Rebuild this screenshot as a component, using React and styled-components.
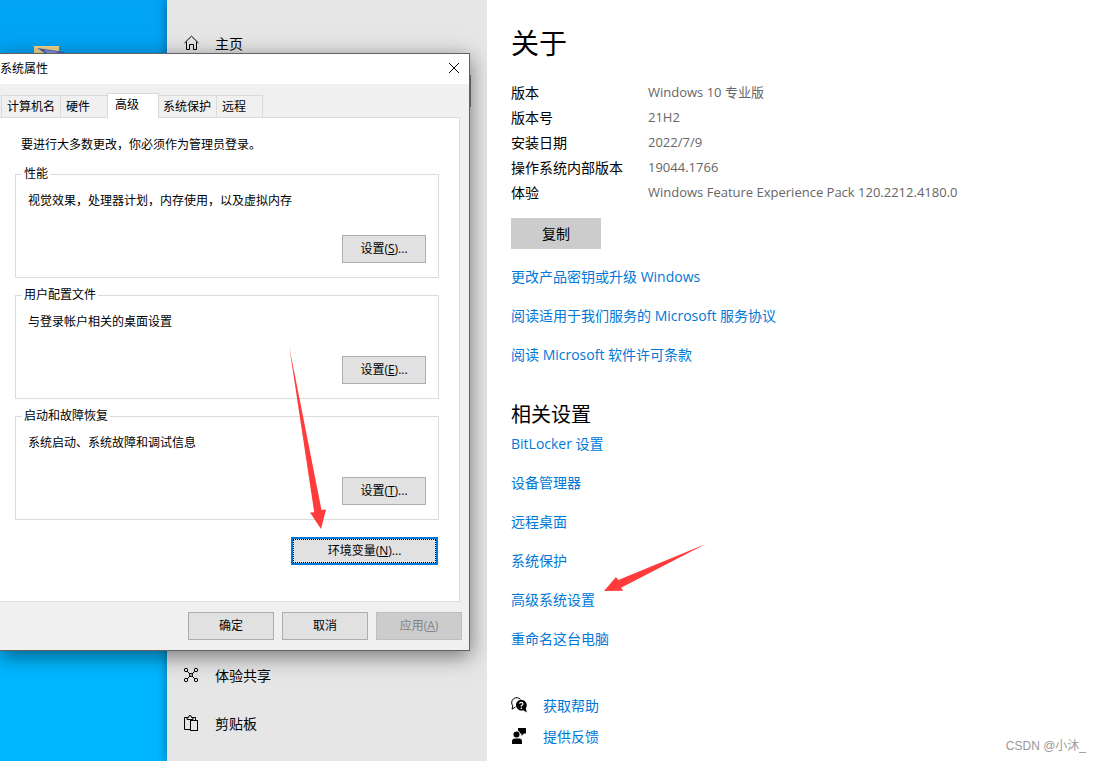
import React from "react";
import styled, { createGlobalStyle } from "styled-components";

const specs = [
  { label: "版本", value: "Windows 10 专业版" },
  { label: "版本号", value: "21H2" },
  { label: "安装日期", value: "2022/7/9" },
  { label: "操作系统内部版本", value: "19044.1766" },
  { label: "体验", value: "Windows Feature Experience Pack 120.2212.4180.0" },
];

const licenseLinks = [
  "更改产品密钥或升级 Windows",
  "阅读适用于我们服务的 Microsoft 服务协议",
  "阅读 Microsoft 软件许可条款",
];

const relatedLinks = [
  "BitLocker 设置",
  "设备管理器",
  "远程桌面",
  "系统保护",
  "高级系统设置",
  "重命名这台电脑",
];

const tabs = [
  { label: "计算机名", width: 59 },
  { label: "硬件", width: 47 },
  { label: "高级", width: 52, active: true },
  { label: "系统保护", width: 57 },
  { label: "远程", width: 47 },
];

const groups = [
  {
    title: "性能",
    text: "视觉效果，处理器计划，内存使用，以及虚拟内存",
    hotkey: "S",
  },
  { title: "用户配置文件", text: "与登录帐户相关的桌面设置", hotkey: "E" },
  {
    title: "启动和故障恢复",
    text: "系统启动、系统故障和调试信息",
    hotkey: "T",
  },
];

function HomeIcon() {
  return (
    <svg width="16" height="16" viewBox="0 0 16 16" fill="none" stroke="#000">
      <path d="M1.5 8 L8.5 1.2 L15.5 8 M3.5 6.8 V14.5 H6.5 V9.5 H10.5 V14.5 H13.5 V6.8" />
    </svg>
  );
}

function ShareIcon() {
  return (
    <svg width="16" height="16" viewBox="0 0 16 16" fill="none" stroke="#000">
      <circle cx="3" cy="3" r="1.7" />
      <circle cx="13" cy="3" r="1.7" />
      <circle cx="3" cy="13" r="1.7" />
      <circle cx="13" cy="13" r="1.7" />
      <circle cx="8" cy="8" r="1.5" />
      <path d="M4.2 4.2 L7 7 M11.8 4.2 L9 7 M4.2 11.8 L7 9 M11.8 11.8 L9 9" />
    </svg>
  );
}

function ClipboardIcon() {
  return (
    <svg width="16" height="16" viewBox="0 0 16 16" fill="none" stroke="#000">
      <path d="M7 14.5 H1.5 V2.5 H4 M10 2.5 H12.5 V5" />
      <path d="M4 4.5 V2.5 H5.5 Q5.5 0.5 7 0.5 T8.5 2.5 H10 V4.5 Z" />
      <rect x="7.5" y="5.5" width="7" height="10" />
    </svg>
  );
}

function HelpIcon() {
  return (
    <svg width="16" height="16" viewBox="0 0 16 16">
      <path
        d="M4.5 10 L1 12.2 L1.8 8.8 A4.8 4.8 0 1 1 9.5 2.5"
        fill="none"
        stroke="#000"
      />
      <path d="M10.2 2.8 A5.4 5.4 0 1 0 12.4 13.2 L15.8 15.4 L14.8 11.2 A5.4 5.4 0 0 0 10.2 2.8 Z" />
      <path
        d="M8.6 6.8 Q8.7 5.4 10.3 5.4 T12 6.8 Q12 7.8 10.3 8.6 V9.6 M10.3 10.6 V12"
        fill="none"
        stroke="#fff"
        strokeWidth="1.2"
      />
    </svg>
  );
}

function FeedbackIcon() {
  return (
    <svg width="16" height="16" viewBox="0 0 16 16">
      <circle cx="5.5" cy="6.5" r="3" />
      <path d="M1 16 V13.5 Q1 10.5 4 10.5 H8 Q11 10.5 11 13.5 V16 Z" />
      <path d="M7 0 H15 V5.5 H13 L10.5 8 V5.5 H9.2 Q8.8 3.5 7 2.8 Z" />
    </svg>
  );
}

function SystemProperties() {
  return (
    <Dialog role="dialog" aria-label="系统属性">
      <TitleBar>
        系统属性
        <CloseButton aria-label="关闭">
          <svg width="12" height="12" viewBox="0 0 12 12" stroke="#000">
            <path d="M1 1 L11 11 M11 1 L1 11" />
          </svg>
        </CloseButton>
      </TitleBar>
      <TabList role="tablist">
        {tabs.map((tab) => (
          <Tab
            key={tab.label}
            role="tab"
            aria-selected={!!tab.active}
            $active={tab.active}
            $width={tab.width}
          >
            {tab.label}
          </Tab>
        ))}
      </TabList>
      <TabPanel role="tabpanel">
        <Intro>要进行大多数更改，你必须作为管理员登录。</Intro>
        {groups.map((group) => (
          <Group key={group.title}>
            <legend>{group.title}</legend>
            <p>{group.text}</p>
            <DialogButton $width={84}>
              设置(<u>{group.hotkey}</u>)...
            </DialogButton>
          </Group>
        ))}
        <EnvButton $width={147}>
          环境变量(<u>N</u>)...
        </EnvButton>
      </TabPanel>
      <DialogFooter>
        <DialogButton $width={86}>确定</DialogButton>
        <DialogButton $width={86}>取消</DialogButton>
        <DialogButton $width={86} disabled>
          应用(<u>A</u>)
        </DialogButton>
      </DialogFooter>
      <EnvArrow width="38" height="182" viewBox="0 0 38 182">
        <path d="M0.3 0 L32.5 163 L37 162.5 L32 182 L21 165.5 L25.2 165.2 Z" />
      </EnvArrow>
    </Dialog>
  );
}

function App() {
  return (
    <>
      <GlobalStyle />
      <Desktop>
        <Wallpaper>
          <svg width="32" height="8" viewBox="0 0 32 8">
            <path d="M0 0 H25 V8 H0 Z" fill="#f0d68a" />
            <path d="M3 2 L30 6 L31 8 H12 Z" fill="#4a63c4" />
            <path d="M10 4 L24 6 L20 8 H14 Z" fill="#8b9be0" />
          </svg>
        </Wallpaper>
        <Sidebar>
          <NavItem href="#home">
            <HomeIcon />
            主页
          </NavItem>
          <NavGroup>
            <NavItem href="#share">
              <ShareIcon />
              体验共享
            </NavItem>
            <NavItem href="#clipboard">
              <ClipboardIcon />
              剪贴板
            </NavItem>
          </NavGroup>
          <ScrollThumb />
        </Sidebar>
        <Content>
          <PageTitle>关于</PageTitle>
          <SpecTable>
            <tbody>
              {specs.map((spec) => (
                <tr key={spec.label}>
                  <th scope="row">{spec.label}</th>
                  <td>{spec.value}</td>
                </tr>
              ))}
            </tbody>
          </SpecTable>
          <CopyButton>复制</CopyButton>
          <LinkList>
            {licenseLinks.map((text) => (
              <li key={text}>
                <TextLink href="#license">{text}</TextLink>
              </li>
            ))}
          </LinkList>
          <SectionTitle>相关设置</SectionTitle>
          <LinkList>
            {relatedLinks.map((text) => (
              <li key={text}>
                <TextLink href="#related">{text}</TextLink>
                {text === "高级系统设置" && (
                  <LinkArrow width="102" height="48" viewBox="0 0 102 48">
                    <path d="M101.7 0 L14.3 36 L12 33 L0 47 L19.3 46.7 L17 43.7 Z" />
                  </LinkArrow>
                )}
              </li>
            ))}
          </LinkList>
          <Support>
            <SupportRow>
              <HelpIcon />
              <TextLink href="#help">获取帮助</TextLink>
            </SupportRow>
            <SupportRow>
              <FeedbackIcon />
              <TextLink href="#feedback">提供反馈</TextLink>
            </SupportRow>
          </Support>
          <Watermark>CSDN @小沐_</Watermark>
        </Content>
        <SystemProperties />
      </Desktop>
    </>
  );
}

const GlobalStyle = createGlobalStyle`
  * {
    box-sizing: border-box;
  }
  body {
    margin: 0;
    font-family: "Open Sans", "Noto Sans CJK SC", sans-serif;
    font-size: 14px;
    color: #000;
  }
  button {
    font-family: inherit;
    color: inherit;
  }
`;

const Desktop = styled.div`
  position: relative;
  display: flex;
  min-height: 100vh;
  overflow: hidden;
`;

const Wallpaper = styled.div`
  width: 167px;
  flex-shrink: 0;
  padding: 46px 0 0 34px;
  line-height: 0;
  background: linear-gradient(#00a3f5, #00b7ff 85%);
`;

const Sidebar = styled.nav`
  position: relative;
  width: 320px;
  flex-shrink: 0;
  padding-top: 19px;
  background: #e6e6e6;
  box-shadow: 0 0 10px rgba(0, 0, 0, 0.4);
`;

const NavGroup = styled.div`
  margin-top: 584px;
`;

const NavItem = styled.a`
  display: flex;
  align-items: center;
  gap: 16px;
  height: 48px;
  padding-left: 16px;
  color: #000;
  text-decoration: none;
`;

const ScrollThumb = styled.div`
  position: absolute;
  top: 75px;
  right: 16px;
  width: 2px;
  height: 32px;
  background: #7a7a7a;
`;

const Content = styled.main`
  position: relative;
  z-index: 2;
  flex: 1;
  display: flex;
  flex-direction: column;
  align-items: flex-start;
  padding: 22px 16px 0 24px;
  background: #fff;
`;

const PageTitle = styled.h1`
  margin: 0 0 16px;
  font-size: 28px;
  line-height: 42px;
  font-weight: 400;
`;

const SpecTable = styled.table`
  border-collapse: collapse;
  line-height: 25px;

  th,
  td {
    height: 25px;
    padding: 0;
    font-weight: 400;
    text-align: left;
  }
  th {
    width: 137px;
  }
  td {
    color: #666;
    font-size: 13px;
  }
`;

const CopyButton = styled.button`
  width: 90px;
  height: 31px;
  margin: 13px 0 7px;
  padding: 0 0 2px;
  border: 0;
  background: #ccc;
  font-size: 14px;
`;

const LinkList = styled.ul`
  margin: 0;
  padding: 0;
  list-style: none;

  li {
    position: relative;
    display: flex;
    align-items: center;
    height: 39px;
  }
`;

const TextLink = styled.a`
  color: #0078d7;
  text-decoration: none;
  white-space: nowrap;
`;

const SectionTitle = styled.h2`
  margin: 30px 0 -4px;
  font-size: 20px;
  line-height: 24px;
  font-weight: 400;
`;

const Support = styled.div`
  margin-top: 32px;
`;

const SupportRow = styled.div`
  display: flex;
  align-items: center;
  gap: 16px;
  height: 31px;
`;

const Watermark = styled.div`
  position: absolute;
  right: 16px;
  bottom: 5px;
  color: #999;
  font: 12px/20px "Liberation Sans", "Noto Sans CJK SC", sans-serif;
`;

const Dialog = styled.section`
  position: absolute;
  z-index: 1;
  top: 53px;
  left: 0;
  width: 470px;
  border: 1px solid #5f6265;
  border-left: 0;
  background: #f0f0f0;
  box-shadow: 0 5px 20px rgba(0, 0, 0, 0.5);
  font-size: 12px;
  line-height: 16px;
`;

const TitleBar = styled.header`
  display: flex;
  align-items: center;
  justify-content: space-between;
  height: 30px;
  background: #fff;
`;

const CloseButton = styled.button`
  display: flex;
  align-items: center;
  justify-content: center;
  width: 31px;
  height: 30px;
  padding: 0 0 2px;
  border: 0;
  background: transparent;
`;

const TabList = styled.div`
  display: flex;
  align-items: flex-end;
  height: 33px;
  padding-left: 1px;
`;

const Tab = styled.button`
  width: ${({ $width }) => $width}px;
  height: ${({ $active }) => ($active ? 25 : 22)}px;
  padding: 1px 0 0 5px;
  border: 1px solid #d9d9d9;
  border-right-width: 0;
  border-bottom: 0;
  background: #f0f0f0;
  font-size: 12px;
  line-height: 16px;
  text-align: left;
  white-space: nowrap;

  &:last-child {
    border-right-width: 1px;
  }
  &[aria-selected="true"] {
    position: relative;
    margin-bottom: -1px;
    padding: 0 0 2px 7px;
    border-right-width: 1px;
    background: #fff;
  }
  &[aria-selected="true"] + & {
    padding-left: 4px;
    border-left-width: 0;
  }
`;

const TabPanel = styled.div`
  display: flex;
  flex-direction: column;
  margin-right: 9px;
  padding: 19px 20px 36px 15px;
  border: 1px solid #dcdcdc;
  border-left: 0;
  background: #fff;
`;

const Intro = styled.p`
  margin: 0 0 13px 6px;
`;

const Group = styled.fieldset`
  display: flex;
  flex-direction: column;
  min-width: 0;
  margin: 0 0 9px;
  padding: 11px 12px 14px;
  border: 1px solid #dcdcdc;

  legend {
    margin-left: -6px;
    padding: 0 2px;
  }
  p {
    margin: 0 0 26px;
  }
  button {
    align-self: flex-end;
  }
`;

const DialogButton = styled.button`
  width: ${({ $width }) => $width}px;
  height: 28px;
  padding: 0;
  border: 1px solid #adadad;
  background: #e1e1e1;
  font-size: 12px;
  line-height: 16px;

  &:disabled {
    border-color: #bfbfbf;
    background: #ccc;
    color: #838383;
  }
`;

const EnvButton = styled(DialogButton)`
  align-self: flex-end;
  margin: 8px 1px 0 0;
  border: 2px solid #0078d7;
  outline: 1px dotted #000;
  outline-offset: -3px;
`;

const DialogFooter = styled.footer`
  display: flex;
  justify-content: flex-end;
  gap: 8px;
  padding: 10px 7px;
`;

const Arrow = styled.svg`
  position: absolute;
  fill: #ff3b3b;
  pointer-events: none;
`;

const EnvArrow = styled(Arrow)`
  top: 293px;
  left: 289px;
`;

const LinkArrow = styled(Arrow)`
  top: -35px;
  left: 93px;
`;

export default App;
